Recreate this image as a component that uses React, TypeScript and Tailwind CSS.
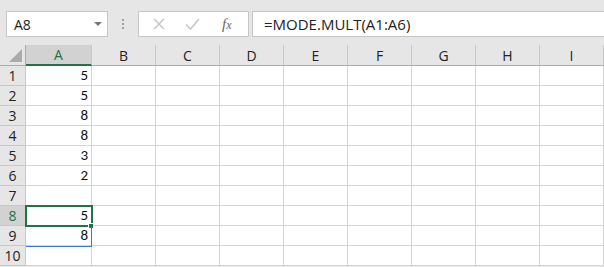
import React from 'react';

const cols = ['A', 'B', 'C', 'D', 'E', 'F', 'G', 'H', 'I'];
const values: Record<number, string> = { 1: '5', 2: '5', 3: '8', 4: '8', 5: '3', 6: '2', 8: '5', 9: '8' };
const rows = [1, 2, 3, 4, 5, 6, 7, 8, 9, 10];

const ui = { fontFamily: '"Open Sans", "Noto Sans", sans-serif' };
const cellFont = { fontFamily: 'Carlito, "Liberation Sans", Calibri, sans-serif' };

const App: React.FC = () => {
  return (
    <div className="w-[604px] h-[267px] overflow-hidden bg-[#e6e6e6] text-black" style={ui}>
      {/* Formula bar */}
      <div className="flex items-start h-[45px] pt-[11px] pl-[6px]">
        <div className="flex items-center justify-between w-[102px] h-[26px] bg-white border border-[#c6c6c6] pl-[7px] pr-[5px]">
          <span className="text-[14px] text-[#222]">A8</span>
          <span className="w-0 h-0 border-l-[4px] border-r-[4px] border-t-[4px] border-l-transparent border-r-transparent border-t-[#777]" />
        </div>
        <div className="flex flex-col items-center justify-center gap-[2px] w-[30px] h-[26px]">
          <span className="w-[2px] h-[2px] bg-[#a0a0a0]" />
          <span className="w-[2px] h-[2px] bg-[#a0a0a0]" />
          <span className="w-[2px] h-[2px] bg-[#a0a0a0]" />
        </div>
        <div className="flex items-center w-[111px] h-[26px] bg-white border border-[#c6c6c6]">
          <svg width="34" height="24" viewBox="0 0 34 24" className="ml-[2px]">
            <path d="M13 7 L23 17 M23 7 L13 17" stroke="#c8c8c8" strokeWidth="1.6" fill="none" />
          </svg>
          <svg width="34" height="24" viewBox="0 0 34 24">
            <path d="M11 12.5 L15.5 17 L24 7" stroke="#c8c8c8" strokeWidth="1.6" fill="none" />
          </svg>
          <span className="ml-[13px] text-[15px] italic text-[#666] leading-none" style={{ fontFamily: '"Liberation Serif", serif' }}>
            f<span className="text-[12px]">x</span>
          </span>
        </div>
        <div className="flex items-center flex-1 h-[26px] ml-[3px] bg-white border border-[#c6c6c6] border-r-0 pl-[11px]">
          <span className="text-[15px] text-[#222]">=MODE.MULT(A1:A6)</span>
        </div>
      </div>

      {/* Sheet */}
      <div className="relative">
        <div className="grid grid-cols-[26px_66px_repeat(8,64px)]">
          {/* corner */}
          <div className="relative h-[21px] border-r border-b border-[#ababab]">
            <svg width="13" height="13" viewBox="0 0 13 13" className="absolute right-[3px] bottom-[3px] block">
              <path d="M13 0 L13 13 L0 13 Z" fill="#ababab" />
            </svg>
          </div>
          {cols.map(c => (
            <div
              key={c}
              className={`flex items-center justify-center h-[21px] text-[14px] border-r border-[#c8c8c8] ${c === 'A' ? 'bg-[#d2d2d2] border-b-2 border-b-[#217346] text-[#217346]' : 'border-b border-b-[#ababab] text-[#222]'}`}
            >
              {c}
            </div>
          ))}
          {rows.map(r => (
            <React.Fragment key={r}>
              <div
                className={`flex items-center justify-center h-[20px] text-[14px] border-r border-b border-[#c8c8c8] ${r === 8 ? 'bg-[#d2d2d2] text-[#217346]' : 'text-[#222]'}`}
              >
                {r}
              </div>
              {cols.map(c => (
                <div
                  key={c}
                  className="flex items-center justify-end h-[20px] pr-[3px] bg-white border-r border-b border-[#d4d4d4] text-[15px] text-[#111]"
                  style={cellFont}
                >
                  {c === 'A' ? values[r] ?? '' : ''}
                </div>
              ))}
            </React.Fragment>
          ))}
        </div>

        {/* selection A8 */}
        <div className="absolute left-[25px] top-[160px] w-[68px] h-[22px] border-2 border-[#217346]" />
        <div className="absolute left-[88px] top-[178px] w-[6px] h-[6px] bg-[#217346] border border-white" />
        {/* range outline on A9 */}
        <div className="absolute left-[91px] top-[182px] w-px h-[20px] bg-[#3c78d8]" />
        <div className="absolute left-[26px] top-[201px] w-[66px] h-px bg-[#3c78d8]" />
      </div>
    </div>
  );
};

export default App;
